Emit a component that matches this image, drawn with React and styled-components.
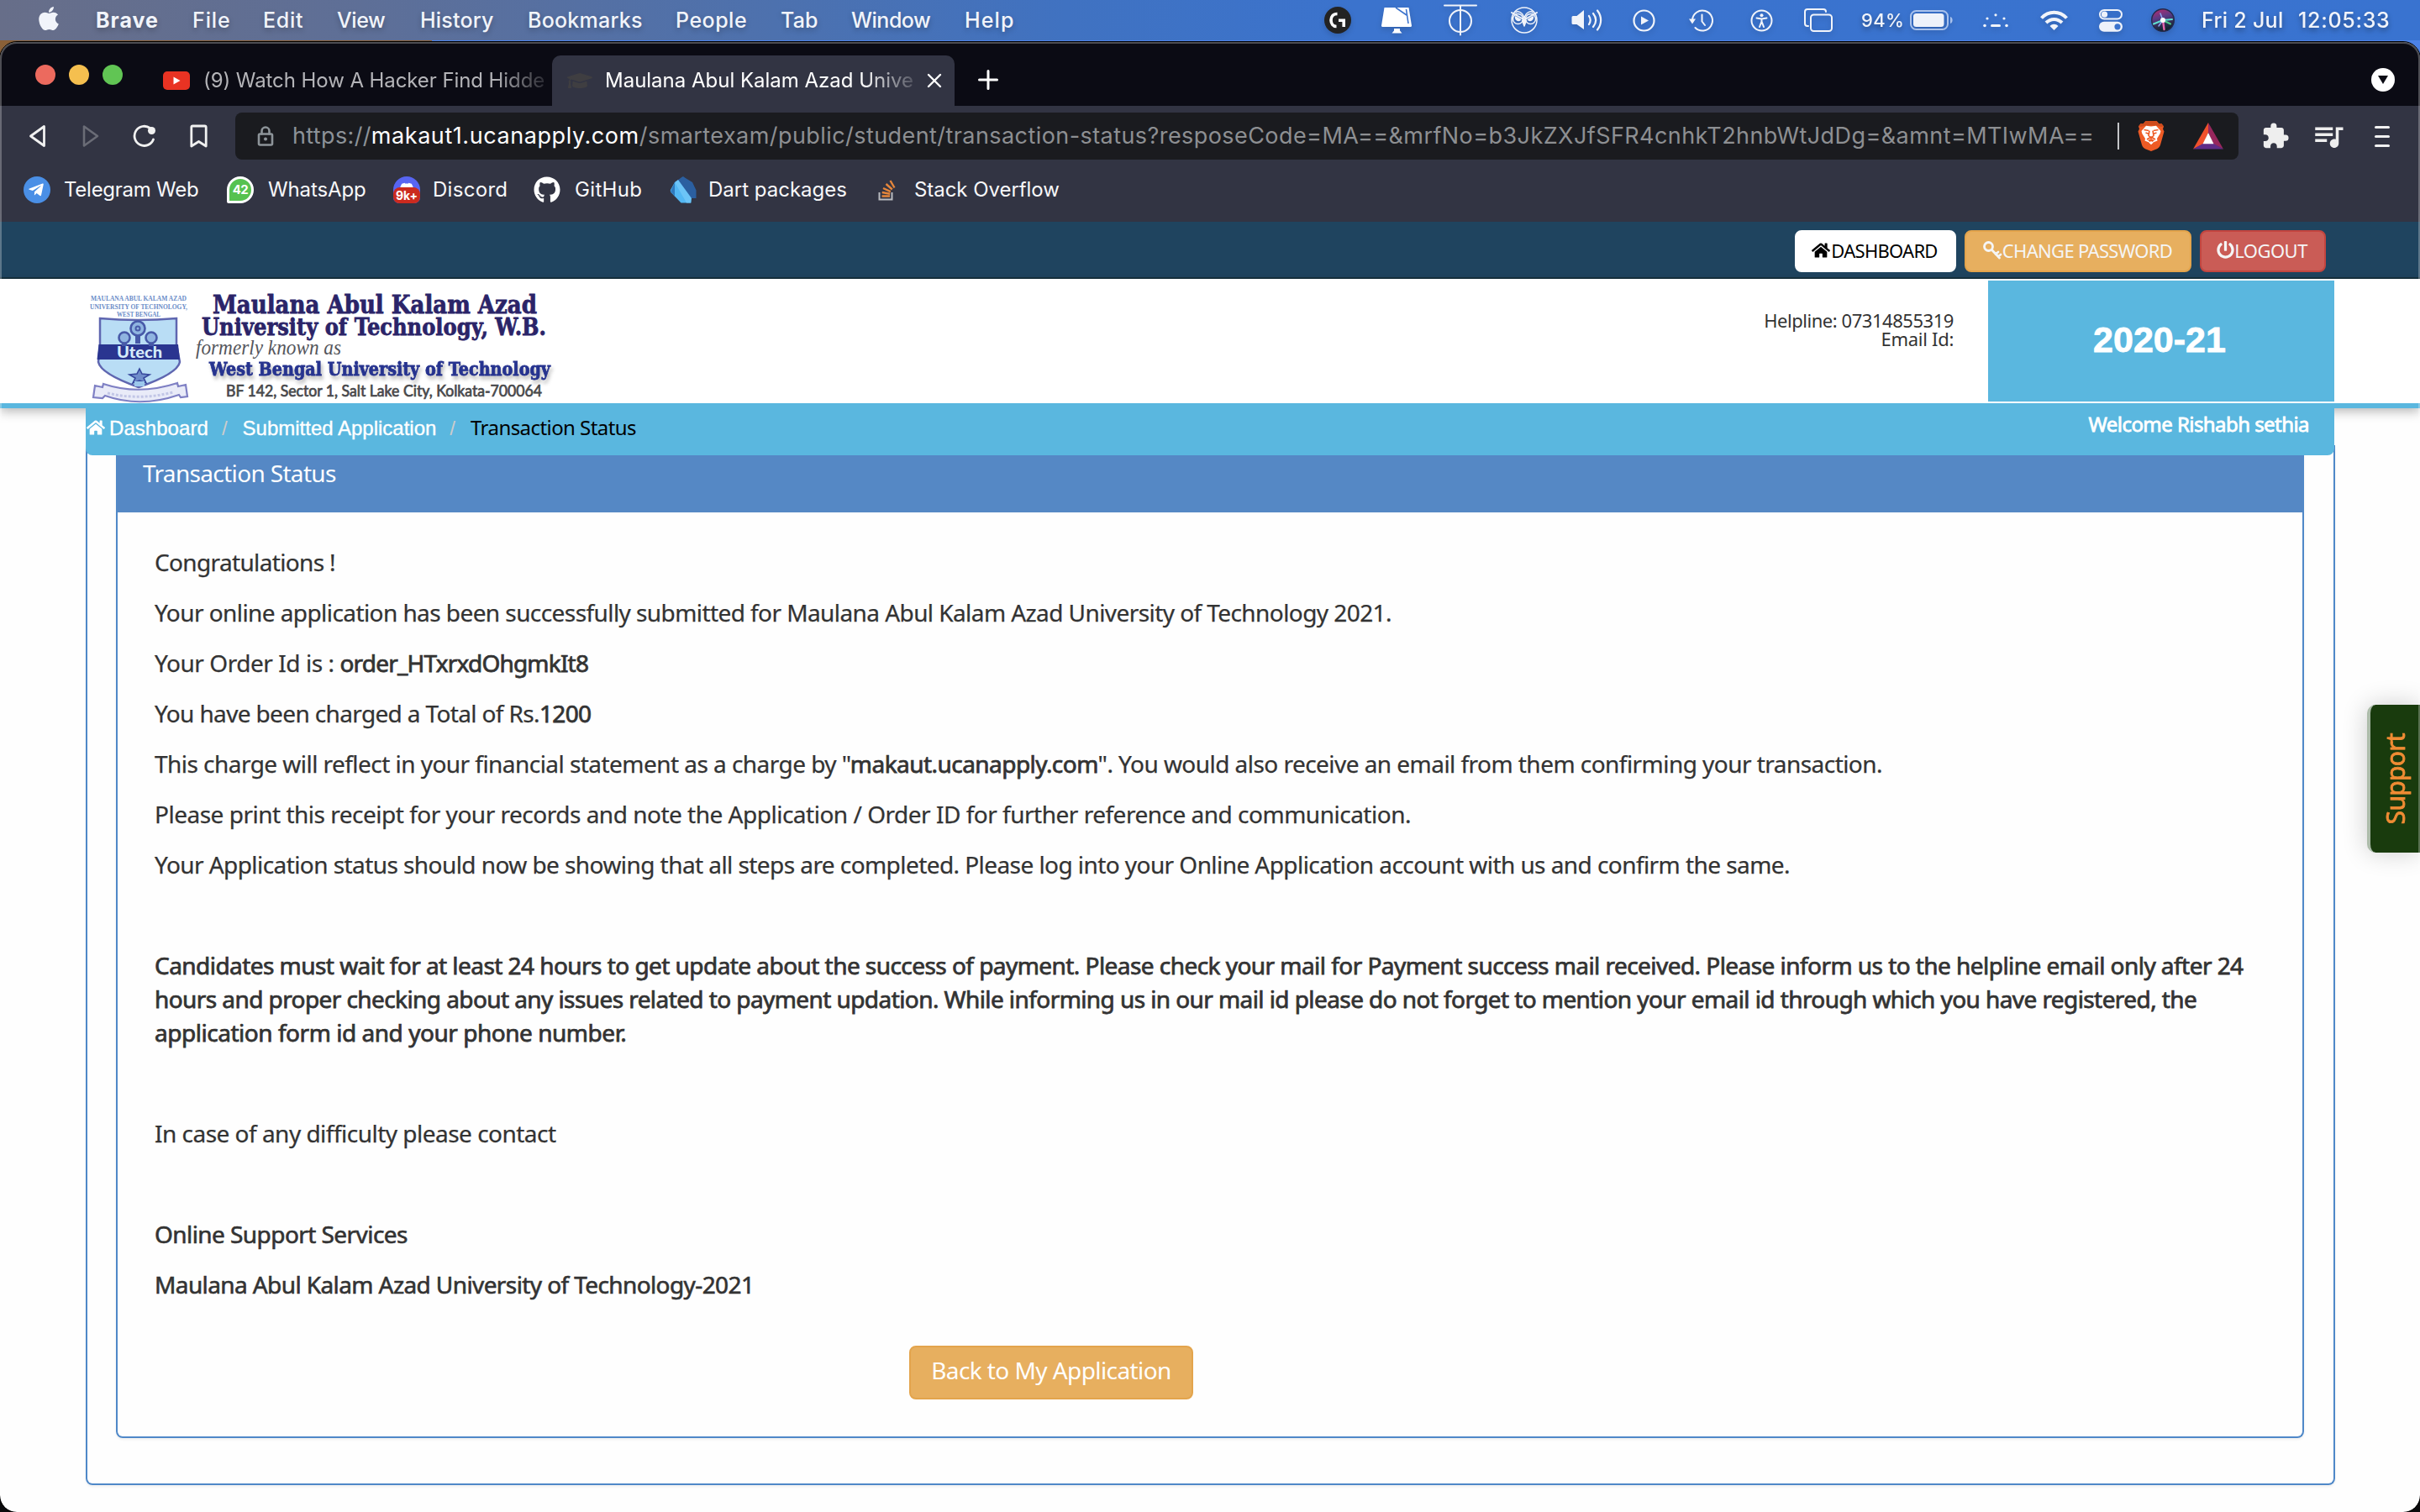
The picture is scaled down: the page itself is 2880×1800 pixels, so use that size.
import React from "react";
import styled, { createGlobalStyle } from "styled-components";
import {
  FaApple, FaGithub, FaHome, FaPowerOff, FaGraduationCap, FaTelegramPlane, FaDiscord,
} from "react-icons/fa";
import { MdExtension, MdQueueMusic } from "react-icons/md";

const ui = `Inter, "Liberation Sans", sans-serif`;
const body = `"Noto Sans", "Open Sans", sans-serif`;
const arial = `"Liberation Sans", Arial, sans-serif`;

const GlobalStyle = createGlobalStyle`
  * { box-sizing: border-box; }
  html, body { margin: 0; padding: 0; background: #000; }
  body { width: 2880px; height: 1800px; overflow: hidden; }
  svg { display: block; flex: none; }
`;

const Desktop = styled.div`
  width: 2880px;
  height: 1800px;
  background:
    linear-gradient(90deg, #8a6038 0, #8a6038 514px, #4c82e8 514px, #4c82e8 100%) 0 0 / 100% 90px no-repeat,
    #0a0a0c;
`;

/* ---------- macOS menu bar ---------- */
const MenuBar = styled.header`
  display: flex;
  align-items: center;
  height: 48px;
  padding: 0 38px 0 42px;
  background: linear-gradient(90deg, #676e89 0, #5e6f97 15%, #4d71ae 32%, #4072c1 44%, #3b73cd 56%, #3973d0 100%);
  color: #f1f4fa;
  font: 500 25px/48px ${ui};
  text-shadow: 0 3px 6px rgba(0, 0, 0, 0.25);
`;
const AppleMark = styled.div`
  display: flex;
  width: 72px;
  padding-bottom: 5px;
`;
const MenuItem = styled.span`
  width: ${(p) => p.$w}px;
  font-weight: ${(p) => (p.$strong ? 700 : 500)};
  letter-spacing: ${(p) => p.$ls}px;
  white-space: nowrap;
`;
const StatusArea = styled.div`
  display: flex;
  align-items: center;
  height: 48px;
  margin-left: auto;
  filter: drop-shadow(0 3px 3px rgba(0, 0, 0, 0.15));
`;
const StatusIcon = styled.div`
  display: flex;
  margin-right: ${(p) => p.$gap}px;
`;
const Percent = styled.span`
  width: 58px;
  font-size: 22px;
  letter-spacing: 0.3px;
`;
const DayText = styled.span`
  width: 115px;
  letter-spacing: 0.3px;
  white-space: nowrap;
`;
const TimeText = styled.span`
  width: 107px;
  letter-spacing: 0.7px;
  white-space: nowrap;
`;

/* ---------- browser window ---------- */
const Window = styled.div`
  position: relative;
  display: flex;
  flex-direction: column;
  height: 1750px;
  margin-top: 2px;
  border-radius: 20px;
  overflow: hidden;
  background: #fefefe;
  outline: 1px solid #000;
  &::after {
    content: "";
    position: absolute;
    inset: 0;
    border: 2px solid rgba(255, 255, 255, 0.27);
    border-bottom: 0;
    border-radius: 20px;
    pointer-events: none;
  }
`;
const TabStrip = styled.div`
  display: flex;
  align-items: center;
  height: 76px;
  padding-left: 42px;
  background: #0b0b14;
  font: 400 24px/60px ${ui};
`;
const Lights = styled.div`
  display: flex;
  gap: 16px;
  margin-top: 2px;
`;
const Light = styled.i`
  width: 24px;
  height: 24px;
  border-radius: 50%;
  background: ${(p) => p.$c};
`;
const Tab = styled.div`
  display: flex;
  align-items: center;
  align-self: flex-end;
  width: ${(p) => p.$w}px;
  height: 60px;
  padding-left: ${(p) => p.$pad}px;
  border-radius: 10px 10px 0 0;
  background: ${(p) => (p.$active ? "#323443" : "transparent")};
  color: ${(p) => (p.$active ? "#ffffff" : "#b4b4b8")};
`;
const TabTitle = styled.span`
  width: ${(p) => p.$w}px;
  margin-left: ${(p) => p.$ml}px;
  white-space: nowrap;
  letter-spacing: ${(p) => p.$ls}px;
  mask-image: linear-gradient(90deg, #000 calc(100% - 62px), rgba(0, 0, 0, 0.15));
`;
const TabClose = styled.div`
  margin-left: 15px;
`;
const NewTab = styled.div`
  margin: 13px 0 0 28px;
`;
const TabSearch = styled.div`
  display: flex;
  align-items: center;
  justify-content: center;
  width: 28px;
  height: 28px;
  margin: 14px 30px 0 auto;
  border-radius: 50%;
  background: #fff;
`;

const Toolbar = styled.div`
  display: flex;
  align-items: center;
  height: 72px;
  padding-left: 34px;
  background: #323443;
`;
const NavIcons = styled.div`
  display: flex;
  align-items: center;
  width: 246px;
`;
const NavIcon = styled.div`
  width: ${(p) => p.$w}px;
`;
const AddressBar = styled.div`
  display: flex;
  align-items: center;
  width: 2384px;
  height: 56px;
  padding: 0 18px 0 26px;
  border-radius: 8px;
  background: #1a1b1f;
  color: #8d8f92;
  font: 400 27px/56px ${ui};
  white-space: nowrap;
`;
const Scheme = styled.span`
  margin-left: 22px;
  letter-spacing: 0.35px;
  color: #8c9298;
`;
const Host = styled.span`
  letter-spacing: 0.57px;
  color: #fff;
`;
const Path = styled.span`
  letter-spacing: 0.43px;
`;
const ShieldArea = styled.div`
  display: flex;
  align-items: center;
  margin-left: auto;
`;
const Divider = styled.i`
  width: 2px;
  height: 32px;
  margin-right: 22px;
  background: #c4c5c8;
`;
const BatMark = styled.div`
  margin-left: 34px;
`;
const ToolbarActions = styled.div`
  display: flex;
  align-items: center;
  gap: 25px;
  margin-left: 27px;
  color: #eeeeee;
`;
const MenuLines = styled.div`
  display: flex;
  flex-direction: column;
  gap: 8px;
  margin-left: 9px;
`;
const MenuLine = styled.i`
  width: 18px;
  height: 3px;
  border-radius: 2px;
  background: #f1f1f1;
`;

const BookmarkBar = styled.nav`
  display: flex;
  align-items: center;
  height: 66px;
  padding: 0 0 10px 28px;
  background: #323443;
  color: #f8f8fa;
  font: 400 24px/40px ${ui};
`;
const Bookmark = styled.div`
  display: flex;
  align-items: center;
  width: ${(p) => p.$w}px;
`;
const BookmarkLabel = styled.span`
  margin-left: ${(p) => p.$ml ?? 16}px;
  letter-spacing: ${(p) => p.$ls}px;
  white-space: nowrap;
`;
const TelegramBadge = styled.div`
  display: flex;
  align-items: center;
  justify-content: center;
  width: 32px;
  height: 32px;
  padding-right: 3px;
  border-radius: 50%;
  background: #4a8fe6;
  color: #fff;
`;
const WhatsAppBadge = styled.div`
  width: 32px;
  height: 32px;
  border: 3px solid #fff;
  border-radius: 50% 50% 50% 2px;
  background: #56c250;
  color: #fff;
  text-align: center;
  font: 700 15px/26px ${ui};
  letter-spacing: -0.5px;
`;
const DiscordBadge = styled.div`
  display: flex;
  flex-direction: column;
  align-items: center;
  width: 32px;
  height: 32px;
  padding-top: 5px;
  border-radius: 16px 16px 7px 7px;
  background: #5865f2;
  color: #fff;
  overflow: hidden;
`;
const DiscordCount = styled.span`
  width: 32px;
  height: 20px;
  margin-top: -10px;
  flex: none;
  border-radius: 8px;
  background: #cb2a1e;
  text-align: center;
  font: 700 14px/20px ${ui};
`;

/* ---------- page ---------- */
const Page = styled.main`
  position: relative;
  flex: 1;
  font-family: ${body};
  color: #333;
`;
const TopBar = styled.div`
  display: flex;
  justify-content: flex-end;
  gap: 10px;
  height: 68px;
  padding: 10px 112px 0 0;
  background: #1f445f;
  border-bottom: 2px solid #17323f;
`;
const TopButton = styled.a`
  display: flex;
  align-items: center;
  justify-content: center;
  gap: ${(p) => p.$gap ?? 0}px;
  width: ${(p) => p.$w}px;
  height: 50px;
  padding: 0 2px 3px 0;
  border: 2px solid ${(p) => p.$line};
  border-radius: 8px;
  background: ${(p) => p.$bg};
  color: ${(p) => p.$fg};
  font-size: 22px;
  line-height: 30px;
  letter-spacing: ${(p) => p.$ls}px;
  white-space: nowrap;
`;
const SiteHeader = styled.div`
  display: flex;
  height: 154px;
  padding: 2px 102px 0 102px;
  border-bottom: 6px solid #5ab7df;
  background: #fff;
  box-shadow: 0 4px 12px rgba(0, 0, 0, 0.28);
`;
const Helpline = styled.div`
  margin: 36px 41px 0 auto;
  text-align: right;
  font-size: 22px;
  line-height: 22px;
`;
const HelpRow = styled.div`
  letter-spacing: ${(p) => p.$ls}px;
`;
const Session = styled.div`
  width: 412px;
  height: 144px;
  padding-bottom: 4px;
  padding-right: 4px;
  background: #5ab7df;
  color: #fff;
  text-align: center;
  font: 700 43px/140px ${arial};
  -webkit-text-stroke: 0.8px #fff;
`;
const Crumbs = styled.div`
  position: relative;
  z-index: 1;
  display: flex;
  align-items: baseline;
  width: 2676px;
  height: 56px;
  margin: 0 auto;
  padding: 0 30px 0 1px;
  border-radius: 0 0 8px 8px;
  background: #5ab7df;
  color: #fff;
  font-size: 24px;
  line-height: 46px;
`;
const CrumbIcon = styled.span`
  align-self: flex-start;
  margin-top: 12px;
  margin-right: 5px;
`;
const CrumbLink = styled.span`
  font-family: ${arial};
  letter-spacing: ${(p) => p.$ls}px;
  -webkit-text-stroke: 0.35px #fff;
`;
const CrumbSlash = styled.span`
  margin: 0 18px 0 16px;
  color: #ccc;
  font-family: ${arial};
`;
const CrumbCurrent = styled.span`
  color: #000;
  letter-spacing: -0.565px;
`;
const Welcome = styled.span`
  align-self: flex-start;
  margin-left: auto;
  line-height: 38px;
  letter-spacing: -0.56px;
  -webkit-text-stroke: 0.8px #fff;
`;
const OuterCard = styled.section`
  width: 2677px;
  height: 1238px;
  margin: -12px 0 0 102px;
  padding: 0 35px 0 34px;
  border: 2px solid #4f88c8;
  border-top: 0;
  border-radius: 0 0 8px 8px;
  box-shadow: 0 2px 3px rgba(0, 0, 0, 0.06);
`;
const Panel = styled.section`
  height: 1182px;
  border: 2px solid #4f88c8;
  border-top: 0;
  border-radius: 0 0 8px 8px;
  box-shadow: 0 2px 3px rgba(0, 0, 0, 0.06);
`;
const PanelTitle = styled.h3`
  height: 80px;
  margin: 0 -1px;
  padding: 12px 0 0 31px;
  background: #5588c5;
  color: #fff;
  font-weight: 400;
  font-size: 28px;
  line-height: 42px;
  letter-spacing: -0.66px;
`;
const PanelBody = styled.div`
  padding: 39px 40px 0 44px;
  font-size: 28px;
  line-height: 40px;
`;
const Line = styled.p`
  min-height: 40px;
  margin: 0 0 20px;
  white-space: nowrap;
  letter-spacing: ${(p) => p.$ls ?? -0.56}px;
  -webkit-text-stroke: ${(p) => p.$stroke ?? 0.25}px currentColor;
`;
const Heavy = styled.span`
  letter-spacing: ${(p) => p.$ls ?? -0.56}px;
  -webkit-text-stroke: ${(p) => p.$stroke ?? 0.75}px currentColor;
`;
const BackButton = styled.a`
  display: flex;
  align-items: center;
  justify-content: center;
  width: 338px;
  height: 64px;
  margin: 53px 0 0 898px;
  padding-bottom: 6px;
  border: 2px solid #e3a44c;
  border-radius: 8px;
  background: #e7af5f;
  color: #fff;
  letter-spacing: -0.575px;
`;
const SupportTab = styled.aside`
  position: absolute;
  right: 0;
  top: 575px;
  display: flex;
  align-items: center;
  justify-content: center;
  width: 63px;
  height: 176px;
  border-left: 4px solid #adbcaa;
  border-radius: 10px 0 0 10px;
  background: #193b0d;
  color: #f08c34;
  box-shadow: 0 0 30px rgba(0, 0, 0, 0.2);
`;
const SupportText = styled.span`
  writing-mode: vertical-rl;
  transform: rotate(180deg);
  font-size: 30px;
  line-height: 59px;
  letter-spacing: -0.7px;
  -webkit-text-stroke: 0.8px #f08c34;
`;

/* ---------- drawings ---------- */
const s = { fill: "none", stroke: "currentColor", strokeLinecap: "round", strokeLinejoin: "round" };

const GMark = () => (
  <svg width="32" height="32" viewBox="0 0 32 32">
    <circle cx="16" cy="16" r="16" fill="#232323" />
    <path d="M15.5 8.5c-5 0-7.500 3.500-7.500 7.500s2.500 7.500 6.500 7.500" stroke="#fff" strokeWidth="3.600" fill="none" />
    <path d="M17 16.200h6.200V24" stroke="#fff" strokeWidth="3.600" fill="none" />
  </svg>
);
const Monitor = () => (
  <svg width="36" height="31" viewBox="0 0 36 31">
    <path d="M3.500 0h29L36 21.500a1.500 1.500 0 0 1-1.500 1.500h-33A1.500 1.500 0 0 1 0 21.500z" fill="#fff" />
    <path d="M17 0l13 9M29.500 2l2.500 17" stroke="#3b73cd" strokeWidth="1.600" fill="none" />
    <path d="M15 25h7v2.500l2.500 3H12.500l2.500-3z" fill="#fff" />
  </svg>
);
const Phi = () => (
  <svg width="40" height="38" viewBox="0 0 40 38" {...s} strokeWidth="2">
    <path d="M1 1.500h38M20 1.500v35" />
    <circle cx="20" cy="20" r="13" />
  </svg>
);
const Owl = () => (
  <svg width="32" height="32" viewBox="0 0 32 32" {...s} strokeWidth="1.500">
    <circle cx="16" cy="16" r="15" />
    <path d="M1 7l15 8.500L31 7" strokeWidth="2" />
    <path d="M6 7c1-2 8-2 10 7 2-9 9-9 10-7" />
    <circle cx="8.500" cy="14.500" r="6" />
    <circle cx="23.500" cy="14.500" r="6" />
    <path d="M5.500 12l6 3.500c-3 2.500-6 0-6-3.500zM26.500 12l-6 3.500c3 2.500 6 0 6-3.500zM13.500 16.500h5L16 23z" fill="currentColor" />
  </svg>
);
const Speaker = () => (
  <svg width="37" height="26" viewBox="0 0 37 26" {...s} strokeWidth="2.200">
    <path d="M0.500 9.500a1.500 1.500 0 0 1 1.500-1.500h4.500L15 1v23L6.500 18H2a1.500 1.500 0 0 1-1.500-1.500z" fill="currentColor" stroke="none" />
    <path d="M21 8c2 3 2 7 0 10M26 5c4 5 4 11 0 16M31 1.500c5.500 7 5.500 16 0 23" />
  </svg>
);
const PlayCircle = () => (
  <svg width="27" height="27" viewBox="0 0 27 27" {...s} strokeWidth="2.200">
    <circle cx="13.500" cy="13.500" r="12" />
    <path d="M10 8.500l9 5-9 5z" fill="currentColor" stroke="none" />
  </svg>
);
const TimeMachine = () => (
  <svg width="29" height="27" viewBox="0 0 29 27" {...s} strokeWidth="2">
    <path d="M4 13a12 12 0 1 1 3.500 9" />
    <path d="M0 11.500h8L4 17.500z" fill="currentColor" stroke="none" />
    <path d="M15.500 6.500v8l3.500 4.500" />
  </svg>
);
const Accessibility = () => (
  <svg width="27" height="27" viewBox="0 0 27 27" {...s} strokeWidth="2">
    <circle cx="13.500" cy="13.500" r="12" />
    <circle cx="13.500" cy="7.200" r="2" fill="currentColor" stroke="none" />
    <path d="M7.500 10.500l6 1 6-1M13.500 11.500v4M13.500 14.500l-2.500 6.500M13.500 14.500l2.500 6.500" />
  </svg>
);
const Stack = () => (
  <svg width="34" height="28" viewBox="0 0 34 28" {...s} strokeWidth="2">
    <path d="M5 21H4a3 3 0 0 1-3-3V4a3 3 0 0 1 3-3h19a3 3 0 0 1 3 3" />
    <rect x="8" y="7.500" width="25" height="19.500" rx="3.500" />
  </svg>
);
const Battery = () => (
  <svg width="52" height="24" viewBox="0 0 52 24">
    <rect x="1" y="1" width="44" height="22" rx="6.500" fill="none" stroke="#a9c2ec" strokeWidth="2" />
    <rect x="4" y="4" width="36.500" height="16" rx="3.500" fill="#eef2fa" />
    <path d="M48 8c3.500 1 3.500 7 0 8z" fill="#a9c2ec" />
  </svg>
);
const Dots = () => (
  <svg width="30" height="17" viewBox="0 0 30 17" fill="currentColor">
    <circle cx="15" cy="1.800" r="1.600" />
    <circle cx="5" cy="6" r="1.600" />
    <circle cx="25" cy="6" r="1.600" />
    <circle cx="2" cy="14.500" r="1.800" />
    <circle cx="28" cy="14.500" r="1.800" />
    <rect x="9" y="13" width="12" height="3" rx="1.500" />
  </svg>
);
const Wifi = () => (
  <svg width="33" height="24" viewBox="0 0 33 24" fill="none" stroke="currentColor" strokeWidth="4">
    <path d="M1.500 9.500c8.500-9 21.500-9 30 0" />
    <path d="M7 15c5.500-5.500 13.500-5.500 19 0" />
    <path d="M11.500 19c3-3 7-3 10 0l-5 5z" fill="currentColor" stroke="none" />
  </svg>
);
const Toggles = () => (
  <svg width="28" height="27" viewBox="0 0 28 27">
    <rect x="1" y="1" width="26" height="10.500" rx="5.200" fill="none" stroke="#eef2fa" strokeWidth="2" />
    <circle cx="6.500" cy="6.200" r="3.600" fill="#eef2fa" />
    <rect x="0" y="14.800" width="28" height="12" rx="6" fill="#eef2fa" />
    <circle cx="22" cy="20.800" r="3.600" fill="#3b73cd" />
  </svg>
);
const Siri = () => (
  <svg width="28" height="28" viewBox="0 0 28 28">
    <defs>
      <linearGradient id="siri" x1="0" y1="0" x2="0.300" y2="1">
        <stop offset="0" stopColor="#c22a6c" />
        <stop offset="0.450" stopColor="#5b3a86" />
        <stop offset="1" stopColor="#12242f" />
      </linearGradient>
    </defs>
    <circle cx="14" cy="14" r="13.300" fill="url(#siri)" stroke="#232a4b" strokeWidth="1.400" />
    <path d="M14 14L3 18.500M14 14l11-1" stroke="#5fe0d2" strokeWidth="2" strokeLinecap="round" />
    <path d="M14 14l9 4.500" stroke="#49c98b" strokeWidth="2" strokeLinecap="round" />
    <path d="M14 14l1.500 11" stroke="#e665ad" strokeWidth="2.400" strokeLinecap="round" />
    <path d="M14 14l-3-8M14 14l-5 7" stroke="#8aa4f0" strokeWidth="1.500" strokeLinecap="round" />
    <circle cx="14" cy="14" r="3" fill="#fff" />
  </svg>
);
const YouTube = () => (
  <svg width="32" height="22" viewBox="0 0 32 22">
    <rect width="32" height="22" rx="5" fill="#e93323" />
    <path d="M12.500 6.500l8 4.500-8 4.500z" fill="#fff" />
  </svg>
);
const Cross = () => (
  <svg width="18" height="18" viewBox="0 0 18 18" stroke="#fff" strokeWidth="2.400" strokeLinecap="round">
    <path d="M2 2l14 14M16 2L2 16" />
  </svg>
);
const Plus = () => (
  <svg width="24" height="24" viewBox="0 0 24 24" stroke="#fff" strokeWidth="3" strokeLinecap="round">
    <path d="M12 1.500v21M1.500 12h21" />
  </svg>
);
const Down = () => (
  <svg width="12" height="10" viewBox="0 0 12 10"><path d="M0 0h12L6 10z" fill="#0b0b14" /></svg>
);
const Back = () => (
  <svg width="22" height="28" viewBox="0 0 22 28" {...s} stroke="#f1f1f1" strokeWidth="2.800">
    <path d="M18.500 2.500v23L2.500 14z" />
  </svg>
);
const Forward = () => (
  <svg width="22" height="28" viewBox="0 0 22 28" {...s} stroke="#6a6c76" strokeWidth="2.600">
    <path d="M3 2.500v23L19 14z" />
  </svg>
);
const Reload = () => (
  <svg width="28" height="28" viewBox="0 0 28 28" {...s} stroke="#f1f1f1" strokeWidth="2.800">
    <path d="M20.500 4.500A11.600 11.600 0 1 0 24.500 18" />
    <circle cx="22.500" cy="7.500" r="4.500" fill="#f1f1f1" stroke="none" />
  </svg>
);
const Ribbon = () => (
  <svg width="21" height="28" viewBox="0 0 21 28" {...s} stroke="#f1f1f1" strokeWidth="2.800">
    <path d="M1.800 3.500a1.500 1.500 0 0 1 1.500-1.500h14.400a1.500 1.500 0 0 1 1.500 1.500V26l-8.700-5.500L1.800 26z" />
  </svg>
);
const Lock = () => (
  <svg width="20" height="24" viewBox="0 0 20 24" {...s} stroke="#8d9499" strokeWidth="2.600">
    <rect x="2" y="9.500" width="16" height="13" rx="1.500" />
    <path d="M5.500 9.500V6a4.500 4.500 0 0 1 9 0v3.500" />
    <circle cx="10" cy="15.500" r="2" fill="#8d9499" stroke="none" />
  </svg>
);
const BraveLion = () => (
  <svg width="32" height="36" viewBox="0 0 32 36">
    <path d="M9.500 0h13l3 3.500 3-.3L31 6.500l-1 3 1.500 3-4.500 16c-.8 2.500-2.500 3.800-4 4.800L16 36l-7-2.700c-1.500-1-3.200-2.300-4-4.800L.5 12.500l1.500-3-1-3L3.500 3.200l3 .3z" fill="#ee5b25" />
    <path d="M9.500 0h13l3 3.500 3-.3L31 6.500 28 7l-5-1.500H9L4 7 1 6.500 3.500 3.200l3 .3z" fill="#cf4c1d" />
    <path d="M16 6.500l6-.8 5.500 6.300-.8 3-3.700 6 .5 2.500-5 2L16 28l-2.500-2.500-5-2 .5-2.500-3.700-6-.8-3L10 5.700z" fill="#fff" />
    <path d="M7.500 10.500l5.500 1M24.500 10.500l-5.500 1M9.500 14l3.500 1.200M22.500 14L19 15.200M14 11.500l-1 6 3 2.500 3-2.500-1-6M11 22l5-3 5 3" stroke="#ee5b25" strokeWidth="1.600" fill="none" />
    <path d="M12 23l4-2 4 2-4 3z" fill="#ee5b25" />
    <path d="M13.500 25.800L16 24l2.500 1.800L16 28z" fill="#fff" />
  </svg>
);
const Bat = () => (
  <svg width="36" height="32" viewBox="0 0 36 32">
    <path d="M18 0L0 31.500 12 25.500 18 12z" fill="#f0512c" />
    <path d="M18 0l18 31.500L24 25.500 18 12z" fill="#97275d" />
    <path d="M0 31.500h36L24.500 25h-13z" fill="#5f2c88" />
    <path d="M18 12l6.500 13.200h-13z" fill="#fff" />
  </svg>
);
const Dart = () => (
  <svg width="32" height="32" viewBox="0 0 32 32">
    <path d="M6 7L15 0.500c1-.5 2 0 3 1l9 5.500 4.500 9.500V26H26z" fill="#2b5fa0" />
    <path d="M6 7L1 16c-.5 1 0 2 .5 3l12 12.500h12L25.500 26z" fill="#53b7f3" />
    <path d="M6 7l4-3 16 22-1 5.500h-5z" fill="#6cc4f7" />
    <path d="M6 7v16.500L1 18z" fill="#2f79bd" />
  </svg>
);
const Overflow = () => (
  <svg width="24" height="26" viewBox="0 0 24 26" fill="none">
    <path d="M1.500 16v8.500h15V16" stroke="#b9bbc0" strokeWidth="2" />
    <g stroke="#e5863b" strokeWidth="2.400">
      <path d="M4.500 20.500h9.500M4.700 16l9.500 1.800M6 11l8.800 4.200M9.500 6l7.300 6.500M14.500 2l5 8.500" />
    </g>
  </svg>
);
const KeyIcon = () => (
  <svg width="24" height="24" viewBox="0 0 24 24" {...s} strokeWidth="2.800">
    <circle cx="7.500" cy="7.500" r="5" />
    <path d="M11.500 11.500l9 9.500M16 16.500l3-2.500M19 19.500l3-2.500" />
  </svg>
);

const fit = { lengthAdjust: "spacingAndGlyphs" };
const Emblem = () => (
  <svg width="566" height="146" viewBox="102 334 566 146">
    <g fill="#6a8cc8" fontFamily="Liberation Serif, serif" fontWeight="700" fontSize="9">
      <text x="108" y="358" textLength="114" {...fit}>MAULANA ABUL KALAM AZAD</text>
      <text x="107" y="368" textLength="116" {...fit}>UNIVERSITY OF TECHNOLOGY,</text>
      <text x="139" y="377" textLength="52" {...fit}>WEST BENGAL</text>
    </g>
    <path d="M119 379q45 4 91 0v31l4 21q-3 14-49 30-45-16-48-30l2-21z" fill="#b9ddf5" stroke="#5f66b0" strokeWidth="2.500" />
    <path d="M117.500 410h94.500l2 18h-98.500z" fill="#2a3590" />
    <g fill="#8fb4e0" stroke="#4759a8" strokeWidth="2.600">
      <path d="M164 400v9M148 407v5M180 407v5" strokeWidth="6" />
      <circle cx="164" cy="391" r="8.500" />
      <circle cx="148" cy="402" r="6.500" />
      <circle cx="180" cy="402" r="6.500" />
      <circle cx="164" cy="391" r="2.500" strokeWidth="2" />
    </g>
    <text x="139" y="426" fill="#d6ecfa" fontFamily="Lato, sans-serif" fontWeight="900" fontSize="18" textLength="54" {...fit}>Utech</text>
    <path d="M166 439l3 6 9 1-7 4 3 6-8-3-8 3 3-6-7-4 9-1z" fill="#6f8ccb" stroke="#36479d" strokeWidth="1.600" />
    <path d="M160 454h12v6h-12z" fill="#9cc8ec" />
    <path d="M111 473l2-14 9 2 1-4q42 14 88-1l1 4 9-2 2 14-8 1-2-3q-46 16-88 1l-3 3z" fill="#e9ebf8" stroke="#7f80c4" strokeWidth="2.200" />
    <path d="M128 468q38 9 78-1" fill="none" stroke="#c2c6e6" strokeWidth="3" strokeDasharray="3 2" />
    <g fontFamily="DejaVu Serif, Liberation Serif, serif" fontWeight="700" fill="#2b2468" stroke="#2b2468" strokeWidth="0.800">
      <text x="253" y="373" fontSize="29" textLength="386" {...fit}>Maulana Abul Kalam Azad</text>
      <text x="240" y="399" fontSize="28" textLength="410" {...fit}>University of Technology, W.B.</text>
    </g>
    <text x="233" y="422" fill="#55565c" fontFamily="Liberation Serif, serif" fontStyle="italic" fontSize="25" textLength="173" {...fit}>formerly known as</text>
    <text x="249" y="447" fill="#26338f" stroke="#26338f" strokeWidth="0.800" fontFamily="DejaVu Serif, Liberation Serif, serif" fontWeight="700" fontSize="21.500" textLength="406" {...fit} filter="drop-shadow(2px 4px 2px rgba(0,0,0,.28))">West Bengal University of Technology</text>
    <text x="269" y="472" fill="#48484b" stroke="#48484b" strokeWidth="0.700" fontFamily="Lato, sans-serif" fontSize="18.500" textLength="376" {...fit}>BF 142, Sector 1, Salt Lake City, Kolkata-700064</text>
  </svg>
);

const menus = [
  ["Brave", 115, 1], ["File", 84, 0.9], ["Edit", 88, 0.7], ["View", 99, -0.4], ["History", 128, 0.2],
  ["Bookmarks", 176, 0.25], ["People", 125, 0.5], ["Tab", 84, 0.16], ["Window", 135, -0.5], ["Help", 60, 1.1],
];
const statusIcons = [
  [GMark, 36], [Monitor, 38], [Phi, 40], [Owl, 40], [Speaker, 36], [PlayCircle, 40],
  [TimeMachine, 44], [Accessibility, 37], [Stack, 34],
];

export default function App() {
  return (
    <Desktop>
      <GlobalStyle />
      <MenuBar>
        <AppleMark><FaApple size={32} /></AppleMark>
        {menus.map(([name, w, ls], i) => (
          <MenuItem key={name} $w={w} $ls={ls} $strong={i === 0}>{name}</MenuItem>
        ))}
        <StatusArea>
          {statusIcons.map(([Icon, gap], i) => (
            <StatusIcon key={i} $gap={gap}><Icon /></StatusIcon>
          ))}
          <Percent>94%</Percent>
          <StatusIcon $gap={35}><Battery /></StatusIcon>
          <StatusIcon $gap={38}><Dots /></StatusIcon>
          <StatusIcon $gap={37}><Wifi /></StatusIcon>
          <StatusIcon $gap={34}><Toggles /></StatusIcon>
          <StatusIcon $gap={32}><Siri /></StatusIcon>
          <DayText>Fri 2 Jul</DayText>
          <TimeText>12:05:33</TimeText>
        </StatusArea>
      </MenuBar>

      <Window>
        <TabStrip>
          <Lights>
            <Light $c="#ec6a5e" />
            <Light $c="#f5bf4f" />
            <Light $c="#61c554" />
          </Lights>
          <Tab $w={511} $pad={48}>
            <YouTube />
            <TabTitle $w={409} $ml={16} $ls={-0.08}>(9) Watch How A Hacker Find Hidde</TabTitle>
          </Tab>
          <Tab $w={479} $pad={18} $active>
            <FaGraduationCap size={30} color="#3f3e41" />
            <TabTitle $w={368} $ml={15} $ls={-0.01}>Maulana Abul Kalam Azad Unive</TabTitle>
            <TabClose><Cross /></TabClose>
          </Tab>
          <NewTab><Plus /></NewTab>
          <TabSearch><Down /></TabSearch>
        </TabStrip>

        <Toolbar>
          <NavIcons>
            <NavIcon $w={63}><Back /></NavIcon>
            <NavIcon $w={61}><Forward /></NavIcon>
            <NavIcon $w={68}><Reload /></NavIcon>
            <NavIcon $w={21}><Ribbon /></NavIcon>
          </NavIcons>
          <AddressBar>
            <Lock />
            <Scheme>https://</Scheme>
            <Host>makaut1.ucanapply.com</Host>
            <Path>/smartexam/public/student/transaction-status?resposeCode=MA==&amp;mrfNo=b3JkZXJfSFR4cnhkT2hnbWtJdDg=&amp;amnt=MTIwMA==</Path>
            <ShieldArea>
              <Divider />
              <BraveLion />
              <BatMark><Bat /></BatMark>
            </ShieldArea>
          </AddressBar>
          <ToolbarActions>
            <MdExtension size={34} />
            <MdQueueMusic size={42} />
            <MenuLines><MenuLine /><MenuLine /><MenuLine /></MenuLines>
          </ToolbarActions>
        </Toolbar>

        <BookmarkBar>
          <Bookmark $w={242}><TelegramBadge><FaTelegramPlane size={20} /></TelegramBadge><BookmarkLabel $ls={-0.26}>Telegram Web</BookmarkLabel></Bookmark>
          <Bookmark $w={198}><WhatsAppBadge>42</WhatsAppBadge><BookmarkLabel $ml={17} $ls={-0.12}>WhatsApp</BookmarkLabel></Bookmark>
          <Bookmark $w={167}><DiscordBadge><FaDiscord size={18} /><DiscordCount>9k+</DiscordCount></DiscordBadge><BookmarkLabel $ml={15} $ls={0.3}>Discord</BookmarkLabel></Bookmark>
          <Bookmark $w={162}><FaGithub size={32} color="#fff" /><BookmarkLabel $ml={17} $ls={0.35}>GitHub</BookmarkLabel></Bookmark>
          <Bookmark $w={248}><Dart /><BookmarkLabel $ml={14} $ls={0}>Dart packages</BookmarkLabel></Bookmark>
          <Bookmark $w={220}><Overflow /><BookmarkLabel $ml={19} $ls={-0.05}>Stack Overflow</BookmarkLabel></Bookmark>
        </BookmarkBar>

        <Page>
          <TopBar>
            <TopButton $w={192} $bg="#fff" $line="#fff" $fg="#000" $ls={-0.73} $gap={1}><FaHome size={22} />DASHBOARD</TopButton>
            <TopButton $w={270} $bg="#e7af5f" $line="#e3a44c" $fg="#f5f5f5" $ls={-0.68}><KeyIcon />CHANGE PASSWORD</TopButton>
            <TopButton $w={150} $bg="#ca5c56" $line="#c3453f" $fg="#f5f5f5" $ls={-0.51}><FaPowerOff size={21} />LOGOUT</TopButton>
          </TopBar>

          <SiteHeader>
            <Emblem />
            <Helpline>
              <HelpRow $ls={-0.45}>Helpline: 07314855319</HelpRow>
              <HelpRow $ls={-0.3}>Email Id:</HelpRow>
            </Helpline>
            <Session>2020-21</Session>
          </SiteHeader>

          <Crumbs>
            <CrumbIcon><FaHome size={22} /></CrumbIcon>
            <CrumbLink $ls={0.05}>Dashboard</CrumbLink>
            <CrumbSlash>/</CrumbSlash>
            <CrumbLink $ls={0}>Submitted Application</CrumbLink>
            <CrumbSlash>/</CrumbSlash>
            <CrumbCurrent>Transaction Status</CrumbCurrent>
            <Welcome>Welcome Rishabh sethia</Welcome>
          </Crumbs>

          <OuterCard>
            <Panel>
              <PanelTitle>Transaction Status</PanelTitle>
              <PanelBody>
                <Line $ls={-0.65}>Congratulations !</Line>
                <Line $ls={-0.576}>Your online application has been successfully submitted for Maulana Abul Kalam Azad University of Technology 2021.</Line>
                <Line $ls={-0.45}>Your Order Id is : <Heavy $ls={-0.8}>order_HTxrxdOhgmkIt8</Heavy></Line>
                <Line $ls={-0.64}>You have been charged a Total of Rs.<Heavy $ls={-0.64}>1200</Heavy></Line>
                <Line $ls={-0.543}>This charge will reflect in your financial statement as a charge by "<Heavy $ls={-0.543}>makaut.ucanapply.com</Heavy>". You would also receive an email from them confirming your transaction.</Line>
                <Line $ls={-0.495}>Please print this receipt for your records and note the Application / Order ID for further reference and communication.</Line>
                <Line $ls={-0.568}>Your Application status should now be showing that all steps are completed. Please log into your Online Application account with us and confirm the same.</Line>
                <Line />
                <Line>
                  <Heavy $ls={-0.552}>Candidates must wait for at least 24 hours to get update about the success of payment. Please check your mail for Payment success mail received. Please inform us to the helpline email only after 24</Heavy>
                  <br />
                  <Heavy $ls={-0.582}>hours and proper checking about any issues related to payment updation. While informing us in our mail id please do not forget to mention your email id through which you have registered, the</Heavy>
                  <br />
                  <Heavy $ls={-0.47}>application form id and your phone number.</Heavy>
                </Line>
                <Line />
                <Line $ls={-0.515}>In case of any difficulty please contact</Line>
                <Line />
                <Line $ls={-0.564} $stroke={0.6}>Online Support Services</Line>
                <Line $ls={-0.6} $stroke={0.6}>Maulana Abul Kalam Azad University of Technology-2021</Line>
                <BackButton>Back to My Application</BackButton>
              </PanelBody>
            </Panel>
          </OuterCard>

          <SupportTab><SupportText>Support</SupportText></SupportTab>
        </Page>
      </Window>
    </Desktop>
  );
}
